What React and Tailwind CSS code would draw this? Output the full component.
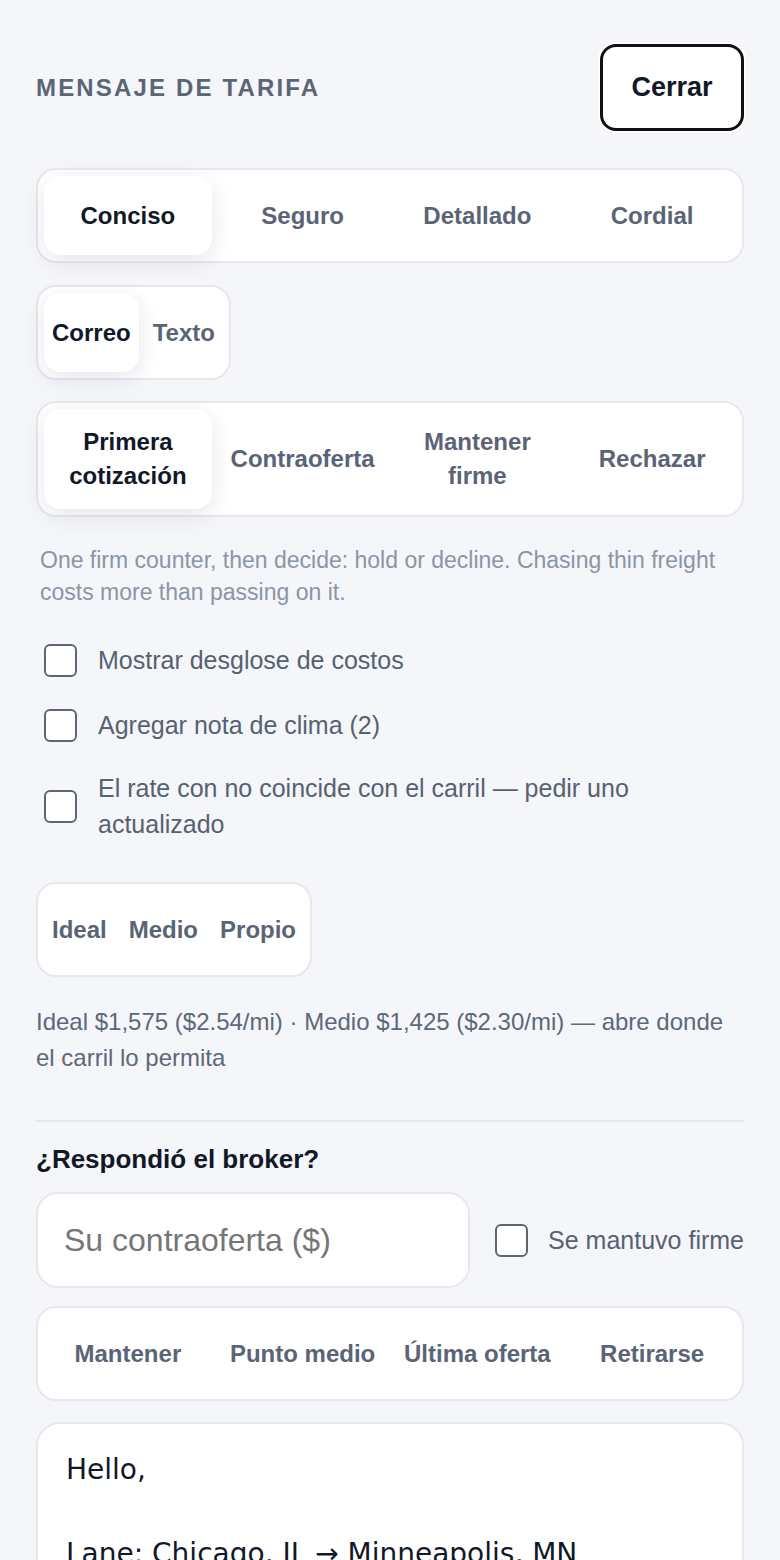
import React from "react";

function Seg({ items, active, cols, className = "", twoLine = false }) {
  return (
    <div
      className={
        "rounded-[20px] border-2 border-[#e6e8ec] bg-white p-[6px] " +
        className
      }
    >
      <div className={cols ? "grid grid-cols-4 gap-[7px]" : "flex gap-[6px]"}>
        {items.map((it, i) => {
          const on = i === active;
          return (
            <button
              key={i}
              className={
                "flex min-h-[79px] items-center justify-center rounded-[16px] text-center text-[24px] font-bold leading-[34px] " +
                (cols ? "px-2 " : "px-2 ") +
                (twoLine ? "py-[16px] " : "py-4 ") +
                (on
                  ? "bg-white text-[#111827] shadow-[0_6px_22px_rgba(15,23,42,0.11)]"
                  : "text-[#5a6476]")
              }
            >
              {it}
            </button>
          );
        })}
      </div>
    </div>
  );
}

function Box() {
  return (
    <span className="block h-[33px] w-[33px] shrink-0 rounded-[6px] border-2 border-[#5f6670] bg-white" />
  );
}

export default function App() {
  const text =
    "Hello,\n\nLane: Chicago, IL \u2192 Minneapolis, MN\nEquipment: 53' Dry Van\nPickup: Tue 6/11\n\nWe can cover this load at $1,575 all-in ($2.54/mi).\n\nLet me know if that works and we'll get it booked.\n\nThanks,";
  return (
    <div
      className="min-h-[1560px] w-full bg-[#f5f6fa] px-[36px] pb-10 pt-[44px]"
      style={{ fontFamily: '"Liberation Sans", Arial, sans-serif' }}
    >
      <div className="flex h-[87px] items-center justify-between">
        <div className="text-[24px] font-bold uppercase tracking-[0.09em] text-[#5a6577]">
          Mensaje de tarifa
        </div>
        <button className="flex h-[87px] w-[144px] items-center justify-center rounded-[16px] border-[3px] border-[#111111] bg-white text-[27px] font-bold text-[#111827] shadow-[0_0_0_2px_#ffffff]">
          Cerrar
        </button>
      </div>

      <Seg
        className="mt-[37px]"
        cols
        active={0}
        items={["Conciso", "Seguro", "Detallado", "Cordial"]}
      />

      <Seg
        className="mt-[22px] inline-block"
        active={0}
        items={["Correo", "Texto"]}
      />

      <Seg
        className="mt-[21px]"
        cols
        twoLine
        active={0}
        items={[
          <span key="a">
            Primera
            <br />
            cotización
          </span>,
          "Contraoferta",
          <span key="b">
            Mantener
            <br />
            firme
          </span>,
          "Rechazar",
        ]}
      />

      <p className="mt-[27px] pl-1 text-[23px] leading-[32px] text-[#8b95a4]">
        One firm counter, then decide: hold or decline. Chasing thin freight
        costs more than passing on it.
      </p>

      <div className="mt-[34px] flex flex-col gap-[29px]">
        {[
          "Mostrar desglose de costos",
          "Agregar nota de clima (2)",
          "El rate con no coincide con el carril \u2014 pedir uno actualizado",
        ].map((t, i) => (
          <label
            key={t}
            className={
              "flex items-center gap-[21px] pl-2 " + (i === 2 ? "-mt-[2px]" : "")
            }
          >
            <Box />
            <span className="pr-24 text-[25px] leading-[36px] text-[#566172]">
              {t}
            </span>
          </label>
        ))}
      </div>

      <div className="mt-[40px] inline-block">
        <Seg active={-1} items={["Ideal", "Medio", "Propio"]} />
      </div>

      <p className="mt-[27px] text-[24px] leading-[36px] text-[#5d6878]">
        Ideal $1,575 ($2.54/mi) · Medio $1,425 ($2.30/mi) — abre donde el carril
        lo permita
      </p>

      <div className="mt-[44px] h-[2px] w-full bg-[#e3e6eb]" />

      <div className="mt-[19px] text-[26px] font-bold leading-[36px] text-[#111827]">
        ¿Respondió el broker?
      </div>

      <div className="mt-[15px] flex items-center gap-[25px]">
        <input
          className="h-[96px] min-w-0 flex-1 rounded-[22px] border-2 border-[#e6e8ec] bg-white pl-[26px] text-[32px] text-[#111827] outline-none placeholder:text-[#767676]"
          placeholder="Su contraoferta ($)"
        />
        <label className="flex shrink-0 items-center gap-[20px]">
          <Box />
          <span className="text-[25px] leading-[36px] text-[#566172]">
            Se mantuvo firme
          </span>
        </label>
      </div>

      <Seg
        className="mt-[18px]"
        cols
        active={-1}
        items={["Mantener", "Punto medio", "Última oferta", "Retirarse"]}
      />

      <textarea
        className="mt-[21px] block h-[520px] w-full resize-none rounded-[24px] border-2 border-[#e6e8ec] bg-white px-[28px] pt-[25px] text-[28px] leading-[42px] text-[#111827] outline-none"
        style={{ fontFamily: '"DejaVu Sans", sans-serif' }}
        defaultValue={text}
      />
    </div>
  );
}
